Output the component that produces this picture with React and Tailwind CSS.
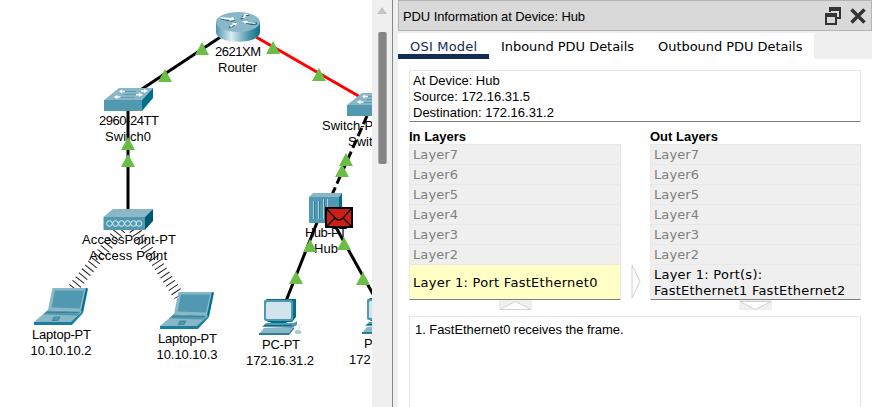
const SANS = "font-['Liberation_Sans',Arial,sans-serif]";

function Label({ x, y, w, children }) {
  return (
    <text x={x} y={y} textLength={w} fontSize="13" fill="#000">
      {children}
    </text>
  );
}

function LinkLight({ x, y }) {
  return <path d={`M${x} ${y}l7 13h-14z`} fill="#6abd45" />;
}

function Router() {
  return (
    <g transform="translate(216 12)">
      <defs>
        <linearGradient id="routerBody">
          <stop offset="0" stopColor="#4f93ab" />
          <stop offset="0.35" stopColor="#dcebf0" />
          <stop offset="0.75" stopColor="#4a93aa" />
          <stop offset="1" stopColor="#0f7088" />
        </linearGradient>
      </defs>
      <path d="M0 10V20C0 33 44 33 44 20V10z" fill="url(#routerBody)" />
      <ellipse cx="22" cy="10" rx="22" ry="10" fill="#8ab7c7" />
      <g fill="none" stroke="#17677f" strokeWidth="2.2">
        <path d="M5 6.5l11 2 3-1M25 7l4-4h4M13 15l5-2 2-2M27 10l9 2 5-.5" />
      </g>
      <g fill="#fff">
        <path d="M4 5l11 1 2-1 2 3-6 1 1-1-8-1zM24 6l3-1 1-3 5 0-1 1-2 0-1 3zM13 14l4-2-1-1 5 0-1 3-2-1-3 2zM26 9l6 0-1 1 8 1 1 1-10-1-1 1z" />
      </g>
    </g>
  );
}

function Switch({ x, y }) {
  return (
    <g transform={`translate(${x} ${y})`}>
      <path d="M0 12L15 0H49L38 12z" fill="#8ab7c7" />
      <path d="M0 12H38V23H0z" fill="#5199b0" />
      <path d="M38 12L49 0V10L38 23z" fill="#00708a" />
      <g stroke="#5c9bb0" strokeWidth="1" fill="none">
        <path d="M18 3.500h14M13 9.500h18M20 6.500h15" />
      </g>
      <g fill="#fff">
        <path d="M15 3.500l3-2v1.300h3v1.400h-3v1.300zM44 3l-4-2v1.300h-3v1.400h3v1.300zM39 6.800l-4-2v1.300h-3v1.400h3v1.300zM9.500 9l4-2v1.300h3v1.400h-3v1.300z" />
      </g>
    </g>
  );
}

function AccessPoint() {
  return (
    <g>
      <path d="M103.500 217L113 209H153L145 217z" fill="#8ab7c7" />
      <path d="M103.500 217H145V230H103.500z" fill="#5199b0" />
      <path d="M145 217L153 209V221L145 230z" fill="#005870" />
      <g fill="none" stroke="#e3f0f4" strokeWidth="1">
        {[109.5, 115.500, 121.500, 127.500, 133.500, 139].map((cx) => (
          <circle key={cx} cx={cx} cy="223.500" r="2.800" />
        ))}
      </g>
    </g>
  );
}

function Laptop({ x, y }) {
  return (
    <g transform={`translate(${x} ${y})`}>
      <path d="M52.500 288H87L82 312L48 310z" fill="#8ab7c7" />
      <path d="M55 290.500H84L80 308.500L51.500 307.500z" fill="#5199b0" />
      <path d="M86 288L88 288.500L83 313L81 311z" fill="#00708a" />
      <path d="M48 310L83 312L72 322H34z" fill="#8ab7c7" />
      <path d="M47.500 310.500L81 311.500L77 315.500L43 314.500z" fill="#5199b0" />
      <path d="M46.500 312.500h32" stroke="#246d84" strokeDasharray="1 1" />
      <path d="M34 322H71L83 311V313L72 325H34z" fill="#17809a" />
      <path d="M54 317h6l-2 3.500h-6z" fill="#5199b0" stroke="#31758b" strokeWidth=".7" />
    </g>
  );
}

function Pc({ x, y }) {
  return (
    <g transform={`translate(${x} ${y})`}>
      <path d="M264 301L267 299H296V317L292 322H268L264 319z" fill="#00708a" />
      <rect x="264" y="300" width="29" height="21" rx="2" fill="#5199b0" />
      <rect x="266" y="302" width="25" height="17" rx="1.500" fill="#d2e4eb" />
      <path d="M269 321H288L285 324H272z" fill="#00708a" />
      <path d="M262 327L266 323H294L297 321V325L292 328z" fill="#5199b0" />
      <path d="M264 325.500h28" stroke="#00708a" />
      <path d="M259 334L264 328H294L289 334z" fill="#8ab7c7" />
      <path d="M259 333H289L294 327V329L289 335H259z" fill="#2b8098" />
      <path d="M296 331q5-2 3-5l3-2" fill="none" stroke="#c9dce3" />
      <ellipse cx="298" cy="332" rx="3.500" ry="2" fill="#a9cbd7" />
    </g>
  );
}

function Hub() {
  return (
    <g>
      <path d="M309 197L313 193H342L339 197z" fill="#8ab7c7" />
      <path d="M309 197H339V223H309z" fill="#5199b0" />
      <path d="M339 197L342 193V219L339 223z" fill="#00708a" />
      <path d="M313.500 201V219M318.500 201V219M323.500 199V219M327.500 199V219" stroke="#a9d0dd" />
      <path d="M314.500 201V219M319.500 201V219M324.500 199V219" stroke="#367e95" />
    </g>
  );
}

function Topology() {
  return (
    <svg width="372" height="407" viewBox="0 0 372 407" className={`block shrink-0 bg-white ${SANS}`}>
      <g stroke="#000" strokeWidth="3" fill="none">
        <path d="M222 36L142 89M128 108V212" />
        <path d="M318 220L286 301M333 222L374 296" />
        <path d="M367 116L331 197" strokeDasharray="9 4" />
      </g>
      <path d="M256 37L362 98" stroke="#f00" strokeWidth="3" />
      <g stroke="#222" strokeWidth="11" strokeDasharray="1 4">
        <path d="M121 229L71 291M134 229L179 296" />
      </g>
      <Router />
      <Switch x={104} y={88} />
      <Switch x={347} y={93} />
      <AccessPoint />
      <Laptop x={0} y={0} />
      <Laptop x={126} y={4} />
      <Pc x={0} y={0} />
      <Pc x={103} y={-1} />
      <Hub />
      <Label x={215} y={56} w={46}>2621XM</Label>
      <Label x={218} y={72} w={39}>Router</Label>
      <Label x={99} y={125} w={60}>2960-24TT</Label>
      <Label x={105} y={141} w={46}>Switch0</Label>
      <Label x={82} y={244} w={94}>AccessPoint-PT</Label>
      <Label x={89} y={260} w={78}>Access Point</Label>
      <Label x={32} y={339} w={59}>Laptop-PT</Label>
      <Label x={30.500} y={355} w={61}>10.10.10.2</Label>
      <Label x={158} y={343} w={59}>Laptop-PT</Label>
      <Label x={156.500} y={359} w={61}>10.10.10.3</Label>
      <Label x={322} y={130}>Switch-P</Label>
      <Label x={348} y={146}>Swit</Label>
      <Label x={305} y={237} w={42}>Hub-PT</Label>
      <Label x={314} y={253} w={24}>Hub</Label>
      <Label x={262} y={349} w={38}>PC-PT</Label>
      <Label x={246} y={365} w={68}>172.16.31.2</Label>
      <Label x={364} y={348}>P</Label>
      <Label x={349} y={364}>172</Label>
      <LinkLight x={202} y={42} />
      <LinkLight x={273} y={41} />
      <LinkLight x={319} y={68} />
      <LinkLight x={165} y={69} />
      <LinkLight x={128} y={137} />
      <LinkLight x={128} y={154} />
      <LinkLight x={346} y={153} />
      <LinkLight x={342} y={164} />
      <LinkLight x={310} y={239} />
      <LinkLight x={296} y={271} />
      <LinkLight x={344} y={237} />
      <LinkLight x={363} y={272} />
      <g stroke="#000">
        <rect x="326" y="208" width="26" height="19" fill="#cc2016" strokeWidth="2" />
        <path d="M326 208L335 218Q339 222 343 218L352 208M326 227L335 218M352 227L343 218" fill="none" strokeWidth="1.200" />
      </g>
    </svg>
  );
}

function ScrollBar() {
  return (
    <div className="flex w-5 shrink-0 flex-col items-center bg-[#efefef] pt-[7px]">
      <svg width="10" height="7" className="shrink-0">
        <path d="M5 0L10 7H0z" fill="#c4c4c4" />
      </svg>
      <div className="mt-[18px] h-[132px] w-[9px] rounded-[2px] border-x border-[#a8a8a8] bg-[#858585]" />
    </div>
  );
}

function TitleBar() {
  return (
    <header className={`flex h-[31px] items-center justify-between border border-[#b4b4b4] bg-[#d9d9d9] pl-1 pr-[5px] text-[13px] ${SANS}`}>
      <span className="whitespace-nowrap pt-[2px] tracking-[-0.1px]">PDU Information at Device: Hub</span>
      <div className="flex items-center gap-[9px]">
        <svg width="16" height="18" fill="none" stroke="#333438" strokeWidth="2">
          <path d="M5 5V1H15V11H12" />
          <path d="M4 2H16" strokeWidth="4" />
          <path d="M1 8H11V17H1z" fill="#d9d9d9" />
          <path d="M0 8H12" strokeWidth="4" />
        </svg>
        <svg width="16" height="16" stroke="#333438" strokeWidth="3.500">
          <path d="M1.500 1.500L14.500 14.500M14.500 1.500L1.500 14.500" />
        </svg>
      </div>
    </header>
  );
}

function Tabs() {
  return (
    <nav className="mt-[2px] flex h-[26px] whitespace-nowrap text-[13px] leading-[27px]">
      <div className="w-[91px] border-b-[5px] border-[#132c55] bg-white pl-3 tracking-[0.2px] text-[#132c55]">OSI Model</div>
      <div className="w-[157px] bg-white pl-3 tracking-[-0.04px]">Inbound PDU Details</div>
      <div className="w-[168px] bg-white pl-3 tracking-[-0.04px]">Outbound PDU Details</div>
    </nav>
  );
}

const LAYERS = [7, 6, 5, 4, 3, 2];

function LayerColumn({ title, active, children }) {
  return (
    <section className={`shrink-0 ${active ? "w-[212px]" : "w-[211px]"}`}>
      <h2 className={`h-[15px] text-[13px] font-bold leading-[15px] ${SANS}`}>{title}</h2>
      <div className="border-x border-t border-[#e9e9e9] bg-[#efefef]">
        {LAYERS.map((n) => (
          <div key={n} className="h-5 border-b border-[#e8e8e8] pl-[3px] text-[13px] leading-[19px] tracking-[0.1px] text-[#808080]">
            Layer{n}
          </div>
        ))}
      </div>
      <div
        className={`flex h-[35px] items-center whitespace-nowrap border-x border-b border-x-[#e9e9e9] border-b-[#808080] pl-[3px] text-[13px] leading-4 ${active ? "bg-[#ffffc6] pt-px tracking-[0.27px]" : "bg-[#efefef] pt-[2px] tracking-[0.24px]"}`}
      >
        {children}
      </div>
    </section>
  );
}

function PduPanel() {
  return (
    <main className="flex w-[474px] shrink-0 flex-col">
      <TitleBar />
      <Tabs />
      <div className="flex-1 bg-white pl-[11px] pt-[11px]">
        <div className={`h-[52px] w-[452px] border border-[#e6e6e6] border-b-[#808080] pl-[3px] pt-[2px] text-[13px] leading-4 ${SANS}`}>
          <p>At Device: Hub</p>
          <p>Source: 172.16.31.5</p>
          <p>Destination: 172.16.31.2</p>
        </div>
        <div className="mt-[7px] flex">
          <LayerColumn title="In Layers" active>
            Layer 1: Port FastEthernet0
          </LayerColumn>
          <div className="flex w-[29px] items-end pb-px pl-[10px]">
            <svg width="10" height="35" fill="none" stroke="#d0d0d0">
              <path d="M1 1V34L9 17.500z" />
            </svg>
          </div>
          <LayerColumn title="Out Layers">
            <span>
              Layer 1: Port(s):
              <br />
              FastEthernet1 FastEthernet2
            </span>
          </LayerColumn>
        </div>
        <div className="flex h-4 gap-[207px] pl-[90px]">
          <svg width="33" height="10" className="bg-[#efefef]">
            <path d="M1 9.500L16.500 1.500L32 9.500z" fill="#fff" stroke="#d2d2d2" />
          </svg>
          <svg width="33" height="10" className="bg-[#efefef]">
            <path d="M1 1.500L16.500 9.500L32 1.500z" fill="#fff" stroke="#d2d2d2" />
          </svg>
        </div>
        <div className={`h-[91px] w-[452px] border border-b-0 border-[#e6e6e6] pl-[5px] pt-[5px] text-[13px] leading-4 tracking-[-0.05px] ${SANS}`}>
          1. FastEthernet0 receives the frame.
        </div>
      </div>
    </main>
  );
}

export default function App() {
  return (
    <div className="flex h-[407px] w-[872px] overflow-hidden bg-[#efefef] font-['DejaVu_Sans',Verdana,sans-serif] text-black">
      <Topology />
      <ScrollBar />
      <div className="mr-[5px] w-px shrink-0 bg-[#7f8790]" />
      <PduPanel />
    </div>
  );
}
